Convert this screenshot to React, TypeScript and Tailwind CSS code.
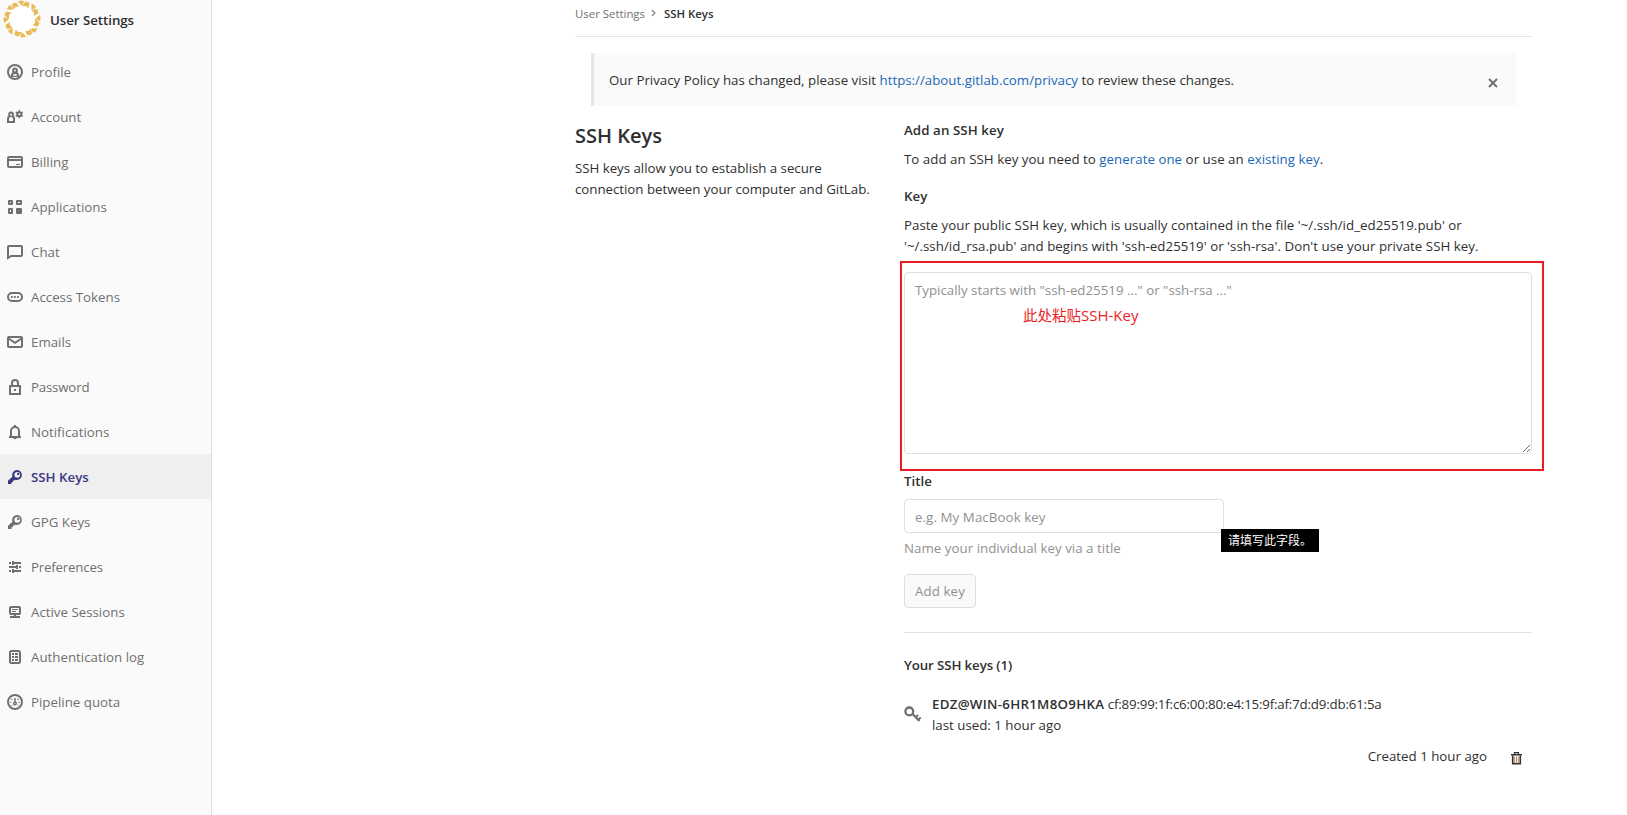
import type { ReactNode } from "react";

function Svg({ children, className = "" }: { children: ReactNode; className?: string }) {
  return (
    <svg viewBox="0 0 16 16" className={`h-4 w-4 shrink-0 ${className}`} fill="none" stroke="currentColor" strokeWidth="2">
      {children}
    </svg>
  );
}

const keyIcon = (
  <Svg>
    <path
      fill="currentColor"
      stroke="none"
      fillRule="evenodd"
      d="M10 1a5 5 0 1 1-1.8 9.700L7.400 11.500 6 11.600v1.400l-1.500.2v1.800H1v-3.300l4.300-4A5 5 0 0 1 10 1zm.3 1.900a2.900 2.900 0 1 0 0 5.800 2.900 2.900 0 0 0 0-5.800z"
    />
    <circle cx="11.200" cy="4.900" r="1.200" fill="currentColor" stroke="none" />
  </Svg>
);

type Item = { label: string; icon: ReactNode; active?: boolean; tight?: boolean };

const items: Item[] = [
  {
    label: "Profile",
    icon: (
      <Svg>
        <circle cx="8" cy="8" r="7" />
        <circle cx="8" cy="6.500" r="1.900" />
        <path d="M5 12v-.7a2.300 2.300 0 0 1 2-2.300h2a2.300 2.300 0 0 1 2 2.300v.7" />
        <path d="M4 12.300h8" strokeWidth="1.200" />
      </Svg>
    ),
  },
  {
    label: "Account",
    icon: (
      <Svg>
        <path d="M2.200 5.300a1.900 1.900 0 0 1 3.800 0c0 1-.3 1.500-.6 2C6.400 7.700 7 8.400 7 9.300V13H1V9.300c0-.9.6-1.600 1.700-2-.3-.5-.5-1-.5-2z" />
        <circle cx="12.300" cy="5.200" r="2" />
        <path d="M12.300 1.200v2M12.300 7.200v2M8.800 3.200l1.700 1M14.100 6.200l1.700 1M15.800 3.200l-1.700 1M10.500 6.200l-1.700 1" strokeWidth="1.600" />
      </Svg>
    ),
  },
  {
    label: "Billing",
    icon: (
      <Svg>
        <rect x="1" y="3" width="14" height="10" rx="1.200" />
        <path d="M1 6h14" />
        <path d="M9 10.500h4" strokeWidth="1" />
      </Svg>
    ),
  },
  {
    label: "Applications",
    icon: (
      <Svg>
        <path d="M2 2h3v3H2zM10 2h4v3h-4zM2 10h3v4H2z" strokeLinejoin="round" />
        <rect x="9" y="9" width="6" height="6" rx="1" fill="currentColor" stroke="none" />
      </Svg>
    ),
  },
  {
    label: "Chat",
    icon: (
      <Svg>
        <path d="M1 14V3a1 1 0 0 1 1-1h12a1 1 0 0 1 1 1v8a1 1 0 0 1-1 1H4.200z" />
      </Svg>
    ),
  },
  {
    label: "Access Tokens",
    icon: (
      <Svg>
        <rect x="1" y="4" width="14" height="8" rx="4" />
        <path d="M4 8h2M7 8h2M10 8h2" strokeWidth="1.800" strokeDasharray="1.700 1.300" />
      </Svg>
    ),
  },
  {
    label: "Emails",
    icon: (
      <Svg>
        <rect x="1" y="3" width="14" height="10" rx="1" />
        <path d="M1.500 4.500L8 8.800l6.500-4.300" />
      </Svg>
    ),
  },
  {
    label: "Password",
    icon: (
      <Svg>
        <path d="M3 7h10v8H3z" />
        <path d="M5 7V4a3 3 0 0 1 6 0v3" />
        <path d="M7 11h2" />
      </Svg>
    ),
    tight: true,
  },
  {
    label: "Notifications",
    icon: (
      <Svg>
        <path d="M8 1v1.500M2 13h12" />
        <path d="M4 13V7a4 4 0 0 1 8 0v6" />
        <path d="M6 13.500a2 1.700 0 0 0 4 0z" fill="currentColor" stroke="none" />
      </Svg>
    ),
  },
  { label: "SSH Keys", icon: keyIcon, active: true },
  { label: "GPG Keys", icon: keyIcon },
  {
    label: "Preferences",
    icon: (
      <Svg>
        <path d="M2 4h2M5 4h9M2 8h8M12 8h2M2 12h2M5 12h9" />
        <path d="M6 2v4M10 6v4M6 10v4" />
      </Svg>
    ),
    tight: true,
  },
  {
    label: "Active Sessions",
    icon: (
      <Svg>
        <rect x="3" y="3" width="10" height="7" rx="1" />
        <path d="M5 5.500h6M5 7.500h4" strokeWidth="1" />
        <path d="M8 10v3M3 13h10" />
      </Svg>
    ),
  },
  {
    label: "Authentication log",
    icon: (
      <Svg>
        <rect x="3" y="2" width="10" height="12" rx="1.500" />
        <path d="M5 5h2M8 5h3M5 8h2M8 8h3M5 11h2M8 11h3" strokeWidth="1.900" />
      </Svg>
    ),
  },
  {
    label: "Pipeline quota",
    icon: (
      <Svg>
        <circle cx="8" cy="8" r="7" />
        <path d="M8 4v4" strokeWidth="1.500" />
        <circle cx="8" cy="9.500" r="1.300" strokeWidth="1.500" />
        <path d="M3.200 8.500h1.300M11.500 8.500h1.300M4.500 5l.9.800M11.500 5l-.9.800M4.500 11.500l.8-.5M11.500 11.500l-.8-.5" strokeWidth="1.200" />
      </Svg>
    ),
  },
];

const petals = [0, 45, 90, 135, 180, 225, 270, 315];

function Avatar() {
  return (
    <svg viewBox="0 0 38 38" className="h-[38px] w-[38px] shrink-0">
      <circle cx="19" cy="19" r="18.700" fill="#fff" stroke="#ececec" strokeWidth=".6" />
      {petals.map((a) => (
        <g key={a} transform={`rotate(${a} 19 19)`} fill="#e9b957">
          <path d="M19 5.800L14.800 1.400 19 .4l2 1.200z" />
          <path d="M19 5.800l3.600-4.400 3.200 1.200-2.600 3.600z" />
          <path d="M13.600 2.600l2.300 4.600-4.200-.6-.5-2.800z" />
        </g>
      ))}
    </svg>
  );
}

function Sidebar() {
  return (
    <aside className="h-full w-[212px] shrink-0 border-r border-[#e1e1e1] bg-[#fafafa]">
      <div className="flex h-[49px] items-start pl-[3px]">
        <Avatar />
        <span className="ml-[9px] pt-[10px] font-semibold tracking-[-0.05px] text-[#2e2e2e]">User Settings</span>
      </div>
      <nav>
        {items.map((it) => (
          <div
            key={it.label}
            className={`flex h-[45px] items-center gap-2 pt-px pl-[7px] ${
              it.active ? "bg-[#efefef] font-semibold text-[#393982]" : "text-[#707070]"
            } ${it.tight ? "tracking-[-0.2px]" : ""}`}
          >
            {it.icon}
            <span className="pt-px">{it.label}</span>
          </div>
        ))}
      </nav>
    </aside>
  );
}

export default function App() {
  return (
    <div className="flex h-[815px] w-[1627px] overflow-hidden bg-white font-['Open_Sans','Noto_Sans_CJK_SC',sans-serif] text-[13.3px] leading-[21px] text-[#303030]">
      <Sidebar />
      <main className="ml-[363px] w-[957px]">
        <div className="flex h-[37px] items-start border-b border-[#e5e5e5] pt-[3px] text-[11.4px]">
          <span className="text-[#707070]">User Settings</span>
          <svg viewBox="0 0 8 8" className="mx-[5px] mt-[6px] h-2 w-2" fill="none" stroke="#868686" strokeWidth="1.300">
            <path d="M2 1l2.800 3L2 7" />
          </svg>
          <span className="ml-px font-semibold">SSH Keys</span>
        </div>

        <div className="mx-4 mt-4 flex h-[53px] items-start justify-between border-l-[3px] border-[#e5e5e5] bg-[#fafafa] pt-[17px] pl-[15px]">
          <p>
            Our Privacy Policy has changed, please visit <a className="text-[#1b69b6]">https://about.gitlab.com/privacy</a> to review these changes.
          </p>
          <svg viewBox="0 0 10 10" className="mt-[8px] mr-[18px] h-[10px] w-[10px]" stroke="#707070" strokeWidth="2">
            <path d="M1 1l8 8M9 1L1 9" />
          </svg>
        </div>

        <div className="mt-[14px] flex">
          <div className="w-[329px] shrink-0 pt-[2px]">
            <h4 className="text-[20px] leading-7 font-semibold">SSH Keys</h4>
            <p className="mt-2 w-[310px] tracking-[-0.03px]">
              SSH keys allow you to establish a secure
              <br />
              connection between your computer and GitLab.
            </p>
          </div>

          <div className="w-[628px]">
            <h5 className="font-semibold tracking-[0.08px]">Add an SSH key</h5>
            <p className="mt-2 tracking-[0.03px]">
              To add an SSH key you need to <a className="text-[#1b69b6]">generate one</a> or use an{" "}
              <a className="text-[#1b69b6]">existing key</a>.
            </p>
            <label className="mt-4 block font-semibold">Key</label>
            <p className="mt-2 tracking-[0.03px] whitespace-nowrap">
              Paste your public SSH key, which is usually contained in the file '~/.ssh/id_ed25519.pub' or
              <br />
              '~/.ssh/id_rsa.pub' and begins with 'ssh-ed25519' or 'ssh-rsa'. Don't use your private SSH key.
            </p>
            <div className="relative mt-[15px] h-[182px]">
              <textarea
                className="block h-[182px] w-full rounded border border-[#dfdfdf] px-[10px] py-[7px] placeholder:text-[#919191]"
                placeholder={'Typically starts with "ssh-ed25519 ..." or "ssh-rsa ..."'}
              />
              <div className="pointer-events-none absolute -top-[11px] -left-[4px] h-[210px] w-[644px] border-2 border-[#ed1c24]" />
              <span className="absolute top-[33px] left-[119px] text-[14.5px] whitespace-nowrap text-[#ed1c24]">
                此处粘贴<span className="text-[15px]">SSH-Key</span>
              </span>
            </div>
            <label className="mt-[17px] block font-semibold">Title</label>
            <div className="relative mt-[7px] w-[320px]">
              <input
                className="block h-[34px] w-full rounded border border-[#dfdfdf] px-[10px] pt-px tracking-[0.08px] placeholder:text-[#919191]"
                placeholder="e.g. My MacBook key"
              />
              <div className="absolute top-[30px] left-[317px] h-[23px] w-[98px] bg-black pl-[7px] text-[12px] leading-[23px] whitespace-nowrap text-white">
                请填写此字段。
              </div>
            </div>
            <p className="mt-[5px] tracking-[0.03px] text-[#919191]">Name your individual key via a title</p>
            <button className="mt-[15px] block h-[34px] w-[72px] rounded border border-[#dfdfdf] bg-[#fafafa] tracking-[0.08px] text-[#919191]">
              Add key
            </button>
            <hr className="mt-6 border-[#e1e1e1]" />
            <h5 className="mt-[22px] font-semibold tracking-[-0.12px]">Your SSH keys (1)</h5>
            <div className="mt-[18px] flex">
              <svg viewBox="0 0 18 17" className="mt-[12px] h-[17px] w-[18px]" fill="none" stroke="#707070">
                <circle cx="5.300" cy="5.400" r="3.900" strokeWidth="2.300" />
                <path d="M8.300 7.800l7.200 7.200" strokeWidth="2.300" />
                <path d="M12 11.200l2-2.300M14.500 13.700l2.200-2.300" strokeWidth="2" />
              </svg>
              <div className="ml-[10px]">
                <div>
                  <strong className="font-semibold tracking-[0.28px]">EDZ@WIN-6HR1M8O9HKA</strong>{" "}
                  <span className="tracking-[-0.18px]">cf:89:99:1f:c6:00:80:e4:15:9f:af:7d:d9:db:61:5a</span>
                </div>
                <div>last used: 1 hour ago</div>
              </div>
            </div>
            <div className="mt-[10px] flex items-start justify-end pr-[10px]">
              <span>Created 1 hour ago</span>
              <svg viewBox="0 0 11 13" className="mt-[6px] ml-[24px] h-[13px] w-[11px]">
                <path d="M3.500 2V.7h4V2" fill="none" stroke="#303030" strokeWidth="1.200" />
                <path d="M0 2h11v1.500H0z" fill="#303030" />
                <path d="M1.700 3.500v8.300h7.600V3.500" fill="none" stroke="#303030" strokeWidth="1.600" />
                <path d="M3.500 4.500v6.500M7.500 4.500v6.500" stroke="#d99a50" strokeWidth="1.200" />
                <path d="M5.500 4.500v6.500" stroke="#6a9fd0" strokeWidth="1.200" />
              </svg>
            </div>
          </div>
        </div>
      </main>
    </div>
  );
}
